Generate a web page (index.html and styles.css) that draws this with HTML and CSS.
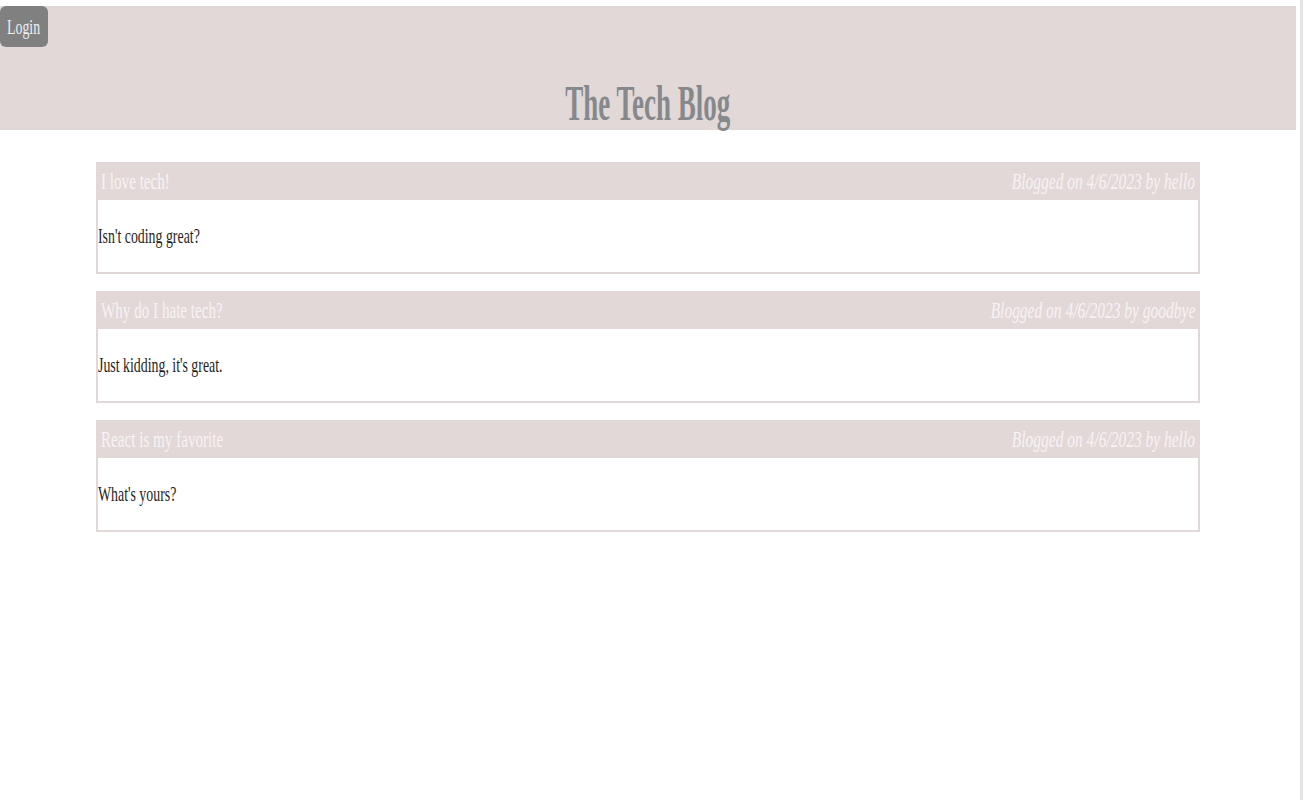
FILE: index.html
```html
<!DOCTYPE html>
<html lang="en">
<head>
<meta charset="utf-8">
<title>The Tech Blog</title>
<link rel="stylesheet" href="styles.css">
</head>
<body>
<div class="page">
  <div class="main">
    <header class="site-header">
      <div class="nav">
        <button class="login"><span class="sx sx-left">Login</span></button>
      </div>
      <h1 class="site-title"><span class="sx sx-title">The Tech Blog</span></h1>
    </header>
    <section class="posts">
      <article class="post">
        <div class="post-head">
          <span class="sx sx-left post-title">I love tech!</span>
          <span class="sx sx-right post-meta">Blogged on 4/6/2023 by hello</span>
        </div>
        <div class="post-body"><span class="sx sx-left">Isn't coding great?</span></div>
      </article>
      <article class="post">
        <div class="post-head">
          <span class="sx sx-left post-title">Why do I hate tech?</span>
          <span class="sx sx-right post-meta">Blogged on 4/6/2023 by goodbye</span>
        </div>
        <div class="post-body"><span class="sx sx-left">Just kidding, it's great.</span></div>
      </article>
      <article class="post">
        <div class="post-head">
          <span class="sx sx-left post-title">React is my favorite</span>
          <span class="sx sx-right post-meta">Blogged on 4/6/2023 by hello</span>
        </div>
        <div class="post-body"><span class="sx sx-left">What's yours?</span></div>
      </article>
    </section>
  </div>
  <div class="edge"></div>
</div>
</body>
</html>
```

FILE: styles.css
```css
html, body {
  margin: 0;
  padding: 0;
  background: #ffffff;
}
body {
  font-family: "Liberation Serif", "Times New Roman", serif;
  color: #222;
}
.page {
  display: flex;
  min-height: 800px;
}
.main {
  width: 1296px;
}
.edge {
  width: 3px;
  margin-left: 4px;
  background: #e5e5e5;
}
.sx {
  display: inline-block;
  white-space: nowrap;
  transform: scaleX(0.63);
}
.sx-left { transform-origin: left center; }
.sx-right { transform-origin: right center; }
.sx-title {
  transform: scaleX(0.54);
  transform-origin: center center;
}
.site-header {
  margin-top: 6px;
  height: 124px;
  background: #e2d8d8;
  display: flex;
  flex-direction: column;
}
.nav {
  display: flex;
}
.login {
  width: 48px;
  height: 41px;
  padding: 0 0 0 7px;
  margin: 0;
  border: none;
  border-radius: 6px;
  background: #808080;
  color: #eef0f2;
  font-family: "Liberation Serif", "Times New Roman", serif;
  font-size: 22px;
  text-align: left;
  line-height: 41px;
}
.site-title {
  margin: auto 0 0 0;
  padding-bottom: 2px;
  text-align: center;
  font-size: 50px;
  line-height: 50px;
  font-weight: bold;
  color: #86898c;
}
.posts {
  padding: 32px 0 0 96px;
  display: flex;
  flex-direction: column;
  gap: 17px;
}
.post {
  width: 1104px;
}
.post-head {
  height: 38px;
  background: #e2d8d8;
  display: flex;
  justify-content: space-between;
  align-items: center;
  padding: 0 5px;
  font-size: 24px;
  color: #f7f3f3;
}
.post-meta {
  font-style: italic;
  transform: scaleX(0.645);
}
.post-body {
  height: 72px;
  border: 2px solid #e2d8d8;
  border-top: none;
  display: flex;
  align-items: center;
  padding-left: 0;
  font-size: 22px;
  color: #1e1e1e;
}
```
